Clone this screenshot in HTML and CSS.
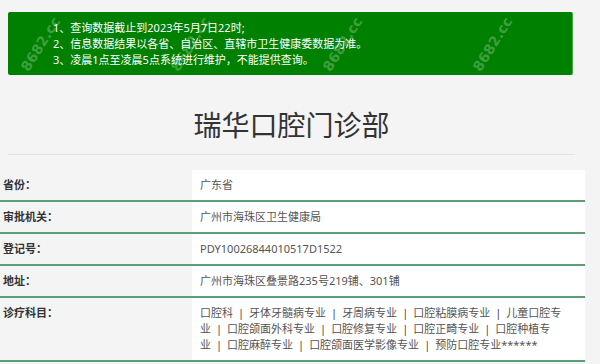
FILE: index.html
```html
<!DOCTYPE html>
<html lang="zh-CN">
<head>
<meta charset="utf-8">
<title>瑞华口腔门诊部</title>
<link rel="stylesheet" href="styles.css">
</head>
<body>
<div class="page">
  <div class="notice">
    <ol class="notice-list">
      <li>1、查询数据截止到2023年5月7日22时;</li>
      <li>2、信息数据结果以各省、自治区、直辖市卫生健康委数据为准。</li>
      <li>3、凌晨1点至凌晨5点系统进行维护，不能提供查询。</li>
    </ol>
    <span class="wm wm1">8682.cc</span>
    <span class="wm wm2">8682.cc</span>
    <span class="wm wm3">8682.cc</span>
    <span class="wm wm4">8682.cc</span>
  </div>

  <h1 class="title">瑞华口腔门诊部</h1>

  <div class="info">
    <div class="row">
      <div class="label">省份：</div>
      <div class="value">广东省</div>
    </div>
    <div class="row">
      <div class="label">审批机关：</div>
      <div class="value">广州市海珠区卫生健康局</div>
    </div>
    <div class="row">
      <div class="label">登记号：</div>
      <div class="value">PDY10026844010517D1522</div>
    </div>
    <div class="row">
      <div class="label">地址：</div>
      <div class="value">广州市海珠区叠景路235号219铺、301铺</div>
    </div>
    <div class="row">
      <div class="label">诊疗科目：</div>
      <div class="value value-list">口腔科<span class="sep">|</span>牙体牙髓病专业<span class="sep">|</span>牙周病专业<span class="sep">|</span>口腔粘膜病专业<span class="sep">|</span>儿童口腔专<br>业<span class="sep">|</span>口腔颌面外科专业<span class="sep">|</span>口腔修复专业<span class="sep">|</span>口腔正畸专业<span class="sep">|</span>口腔种植专<br>业<span class="sep">|</span>口腔麻醉专业<span class="sep">|</span>口腔颌面医学影像专业<span class="sep">|</span>预防口腔专业******</div>
    </div>
  </div>
</div>
</body>
</html>
```

FILE: styles.css
```css
html, body {
  margin: 0;
  padding: 0;
  background: #f4f4f4;
}

body {
  font-family: "Noto Sans", "Noto Sans CJK SC", sans-serif;
  color: #333;
}

.page {
  width: 585px;
  padding-top: 12px;
}

.notice {
  position: relative;
  overflow: hidden;
  margin: 0 12px 0 8px;
  height: 63px;
  box-sizing: border-box;
  background: #008000;
  border-right: 1px solid #4aa64a;
  border-radius: 2px;
  padding: 8px 0 0 45px;
}

.notice-list {
  list-style: none;
  margin: 0;
  padding: 0;
  color: #fff;
  font-size: 11px;
  line-height: 16px;
}

.wm {
  position: absolute;
  font-family: "DejaVu Sans", sans-serif;
  font-weight: 700;
  font-size: 14px;
  line-height: 16px;
  color: rgba(255, 255, 255, 0.26);
  transform: rotate(-58deg);
  white-space: nowrap;
  pointer-events: none;
}

.wm1 { left: 2px; top: 24px; }
.wm2 { left: 152px; top: 24px; }
.wm3 { left: 304px; top: 24px; }
.wm4 { left: 454px; top: 24px; }

.title {
  margin: 33px 10px 0 8px;
  padding-bottom: 12px;
  border-bottom: 1px solid #e4e4e4;
  text-align: center;
  font-weight: 400;
  font-size: 28px;
  line-height: 34px;
  color: #333;
}

.info {
  margin-top: 15px;
}

.row {
  display: grid;
  grid-template-columns: 192px 1fr;
  border-bottom: 2px solid #5c9e78;
  font-size: 11px;
  line-height: 16px;
}

.label {
  padding: 7px 3px;
  font-weight: 700;
  color: #333;
}

.value {
  background: #fff;
  padding: 7px 8px;
  color: #555;
}

.value-list {
  white-space: nowrap;
}

.sep {
  margin: 0 5px;
  color: #444;
}
```
